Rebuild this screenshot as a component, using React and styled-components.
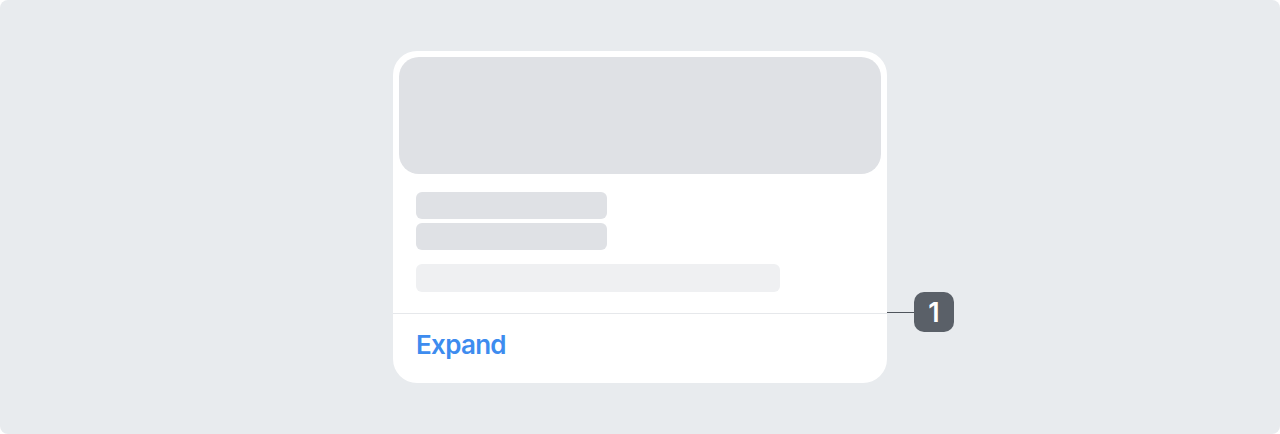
import React from 'react'
import styled, { createGlobalStyle } from 'styled-components'

const Global = createGlobalStyle`
  html, body { margin: 0; padding: 0; background: #ffffff; }
  body { font-family: Inter, "Noto Sans", sans-serif; }
`

const Stage = styled.div`
  width: 1280px;
  height: 434px;
  box-sizing: border-box;
  background: #e8ebee;
  border-radius: 8px;
  display: flex;
  align-items: center;
  justify-content: center;
`

const Card = styled.div`
  position: relative;
  width: 494px;
  height: 332px;
  box-sizing: border-box;
  background: #ffffff;
  border-radius: 24px;
  padding: 6px 0 0;
  display: flex;
  flex-direction: column;
`

const Media = styled.div`
  margin: 0 6px;
  height: 117px;
  border-radius: 20px;
  background: #dfe1e5;
`

const Body = styled.div`
  padding: 18px 23px 21px;
  display: flex;
  flex-direction: column;
`

const Line = styled.div`
  width: ${p => p.$w}px;
  height: ${p => p.$h || 27}px;
  margin-top: ${p => p.$mt || 0}px;
  border-radius: 6px;
  background: ${p => (p.$light ? '#eff0f2' : '#dfe1e5')};
`

const Footer = styled.div`
  flex: 1;
  border-top: 1px solid #e6e8eb;
  display: flex;
  align-items: center;
  padding: 0 23px 8px;
`

const Action = styled.span`
  font-size: 26px;
  font-weight: 600;
  color: #3d8cef;
  letter-spacing: -0.7px;
`

const Callout = styled.div`
  position: absolute;
  left: 100%;
  top: 241px;
  display: flex;
  align-items: center;
`

const Leader = styled.div`
  width: 27px;
  height: 1px;
  background: #4f555c;
`

const Badge = styled.div`
  width: 40px;
  height: 40px;
  border-radius: 10px;
  background: #5a6068;
  color: #ffffff;
  font-size: 27px;
  font-weight: 600;
  display: flex;
  align-items: center;
  justify-content: center;
`

export default function App() {
  return (
    <>
      <Global />
      <Stage>
        <Card>
          <Media />
          <Body>
            <Line $w={191} />
            <Line $w={191} $mt={4} />
            <Line $w={364} $h={28} $mt={14} $light />
          </Body>
          <Footer>
            <Action>Expand</Action>
          </Footer>
          <Callout>
            <Leader />
            <Badge>1</Badge>
          </Callout>
        </Card>
      </Stage>
    </>
  )
}
